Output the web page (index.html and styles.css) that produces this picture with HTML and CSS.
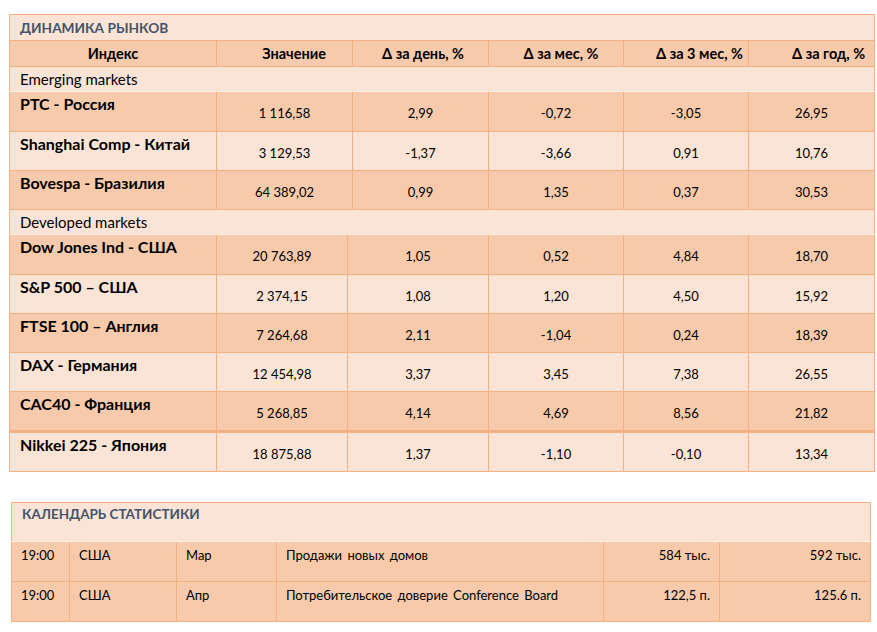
FILE: index.html
```html
<!DOCTYPE html>
<html lang="ru">
<head>
<meta charset="utf-8">
<title>Динамика рынков</title>
<link rel="stylesheet" href="styles.css">
</head>
<body>
<div class="page">
  <section class="markets">
    <table class="grid t-emerging">
      <colgroup>
        <col class="c1"><col class="c2"><col class="c3"><col class="c4"><col class="c5"><col class="c6">
      </colgroup>
      <tr class="title-row light"><td colspan="6">ДИНАМИКА РЫНКОВ</td></tr>
      <tr class="head-row dark">
        <th class="h-index">Индекс</th>
        <th class="h-value">Значение</th>
        <th class="h-day">Δ за день, %</th>
        <th class="h-month">Δ за мес, %</th>
        <th class="h-3m">Δ за 3 мес, %</th>
        <th class="h-year">Δ за год, %</th>
      </tr>
      <tr class="group-row light"><td colspan="6">Emerging markets</td></tr>
      <tr class="data-row dark first"><td class="name">РТС - Россия</td><td>1 116,58</td><td>2,99</td><td>-0,72</td><td>-3,05</td><td>26,95</td></tr>
      <tr class="data-row light"><td class="name">Shanghai Comp - Китай</td><td>3 129,53</td><td>-1,37</td><td>-3,66</td><td>0,91</td><td>10,76</td></tr>
      <tr class="data-row dark"><td class="name">Bovespa - Бразилия</td><td>64 389,02</td><td>0,99</td><td>1,35</td><td>0,37</td><td>30,53</td></tr>
      <tr class="group-row light"><td colspan="6">Developed markets</td></tr>
    </table>
    <table class="grid t-developed">
      <colgroup>
        <col class="c1"><col class="d2"><col class="d3"><col class="c4"><col class="c5"><col class="c6">
      </colgroup>
      <tr class="data-row dark first"><td class="name">Dow Jones Ind - США</td><td>20 763,89</td><td>1,05</td><td>0,52</td><td>4,84</td><td>18,70</td></tr>
      <tr class="data-row light"><td class="name">S&amp;P 500 – США</td><td>2 374,15</td><td>1,08</td><td>1,20</td><td>4,50</td><td>15,92</td></tr>
      <tr class="data-row dark"><td class="name">FTSE 100 – Англия</td><td>7 264,68</td><td>2,11</td><td>-1,04</td><td>0,24</td><td>18,39</td></tr>
      <tr class="data-row light"><td class="name">DAX - Германия</td><td>12 454,98</td><td>3,37</td><td>3,45</td><td>7,38</td><td>26,55</td></tr>
      <tr class="data-row dark"><td class="name">CAC40 - Франция</td><td>5 268,85</td><td>4,14</td><td>4,69</td><td>8,56</td><td>21,82</td></tr>
      <tr class="data-row light last-row"><td class="name">Nikkei 225 - Япония</td><td>18 875,88</td><td>1,37</td><td>-1,10</td><td>-0,10</td><td>13,34</td></tr>
    </table>
  </section>

  <section class="calendar">
    <table class="grid t-calendar">
      <colgroup>
        <col class="k1"><col class="k2"><col class="k3"><col class="k4"><col class="k5"><col class="k6">
      </colgroup>
      <tr class="cal-title light"><td colspan="6">КАЛЕНДАРЬ СТАТИСТИКИ</td></tr>
      <tr class="cal-row dark"><td>19:00</td><td>США</td><td>Мар</td><td class="spaced">Продажи новых домов</td><td class="num">584 тыс.</td><td class="num">592 тыс.</td></tr>
      <tr class="cal-row dark"><td>19:00</td><td>США</td><td>Апр</td><td class="spaced">Потребительское доверие&nbsp;Conference Board</td><td class="num">122,5 п.</td><td class="num">125.6 п.</td></tr>
    </table>
  </section>
</div>
</body>
</html>
```

FILE: styles.css
```css
html, body {
  margin: 0;
  padding: 0;
  background: #ffffff;
}

body {
  font-family: Lato, "Open Sans", "Noto Sans", sans-serif;
  color: #000000;
}

.page {
  padding: 14px 0 0 9px;
}

.grid {
  border-collapse: collapse;
  table-layout: fixed;
}

.grid td,
.grid th {
  border: 1px solid #f4b083;
  padding: 0;
}

.light { background: #fbe4d5; }
.dark { background: #f7caac; }

/* market tables */
.t-emerging,
.t-developed {
  width: 865px;
}

.c1 { width: 207px; }
.c2 { width: 136px; }
.c3 { width: 136px; }
.c4 { width: 135px; }
.c5 { width: 125px; }
.c6 { width: 126px; }
.d2 { width: 131px; }
.d3 { width: 141px; }

.title-row td {
  height: 25px;
  padding: 0 0 0 10px;
  font-weight: 700;
  font-size: 13.7px;
  color: #44546a;
  vertical-align: middle;
}

.head-row th {
  height: 25px;
  font-weight: 700;
  font-size: 14.5px;
  text-align: center;
  vertical-align: middle;
}

.head-row .h-value { padding-left: 19px; }
.head-row .h-day { padding-left: 5px; }
.head-row .h-month { padding-left: 10px; }
.head-row .h-3m { padding-left: 27px; }
.head-row .h-year { padding-left: 34px; }

.group-row td {
  height: 23px;
  padding: 0 0 1px 10px;
  font-size: 15px;
  vertical-align: middle;
  border-bottom: 1px solid #fdf0e7;
}

.data-row td {
  height: 35px;
  font-size: 13px;
  text-align: center;
  vertical-align: middle;
  padding-top: 3px;
}

.data-row.first td {
  height: 36px;
}

.data-row td.name {
  text-align: left;
  vertical-align: top;
  padding: 2px 0 0 10px;
  font-weight: 700;
  font-size: 16px;
}

.t-developed tr:first-child td {
  border-top: none;
}

.t-developed .last-row td {
  border-top: 3px solid #f4b083;
}

/* calendar */
.calendar {
  margin-top: 30px;
  margin-left: 2px;
}

.t-calendar {
  width: 859px;
}

.k1 { width: 58px; }
.k2 { width: 107px; }
.k3 { width: 100px; }
.k4 { width: 327px; }
.k5 { width: 116px; }
.k6 { width: 151px; }

.cal-title td {
  height: 35px;
  padding: 3px 0 0 10px;
  font-weight: 700;
  font-size: 13.5px;
  color: #44546a;
  vertical-align: top;
  border-bottom-color: #fdf0e7;
}

.cal-row td {
  height: 34px;
  padding: 5px 9px 0 9px;
  font-size: 13px;
  vertical-align: top;
}

.cal-row td.spaced {
  word-spacing: 2px;
}

.cal-row td.num {
  text-align: right;
}
```
